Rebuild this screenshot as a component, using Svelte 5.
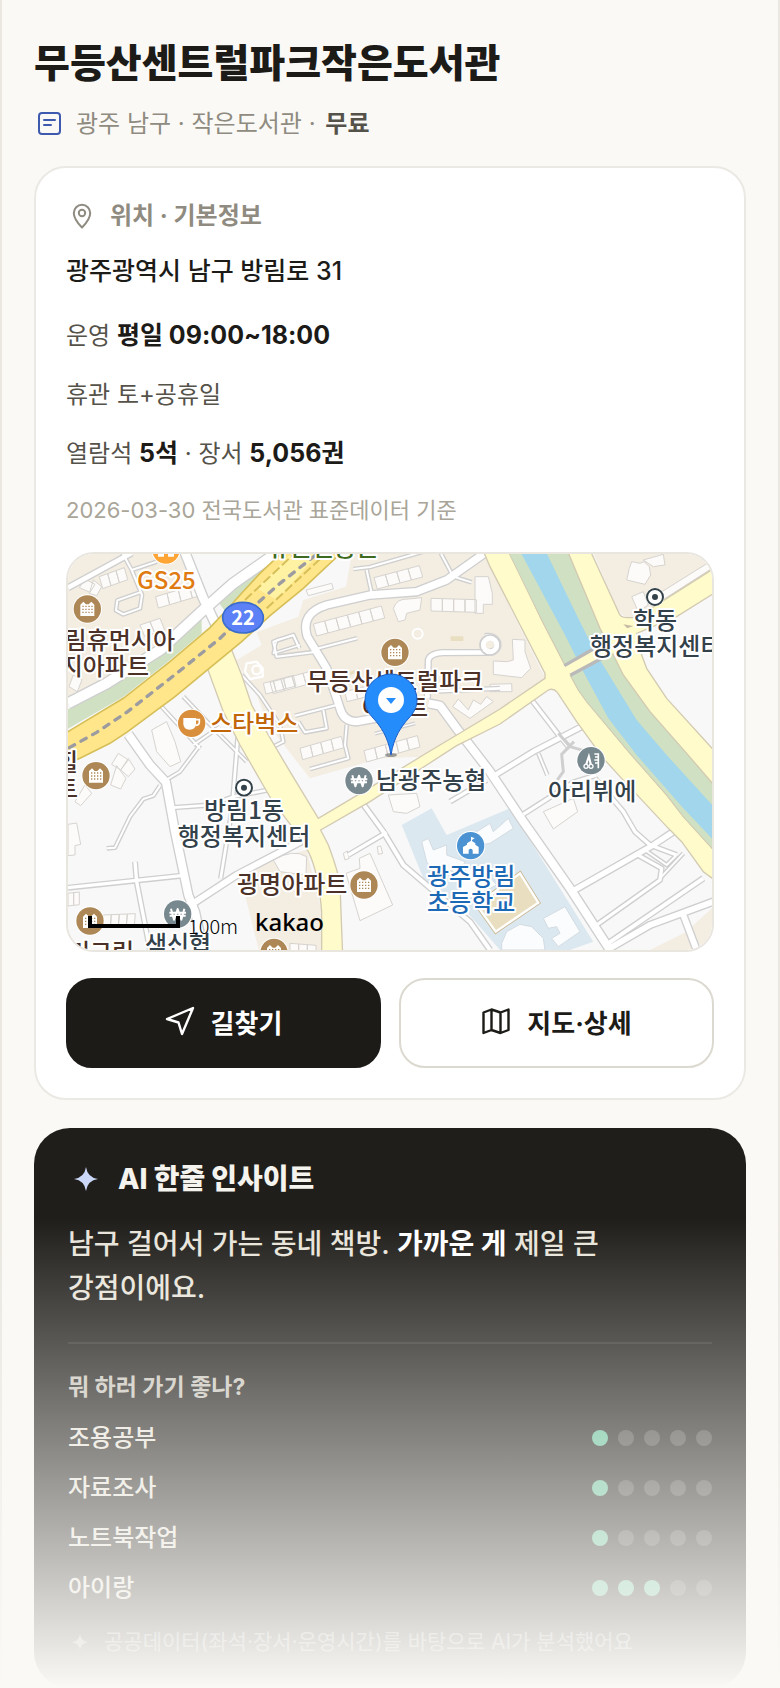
<script>
  const activities = [
    { name: '조용공부', score: 1 },
    { name: '자료조사', score: 1 },
    { name: '노트북작업', score: 1 },
    { name: '아이랑', score: 3 }
  ];
  const levels = [1, 2, 3, 4, 5];

  // Minor streets: [path, casing width]
  const streets = [
    ['M24 128L215 24', 22],
    ['M185 20L215 75L290 50M215 75L246 150L240 190L190 208L168 196L172 166L240 142', 14],
    ['M24 475L140 415L300 315L430 195L520 115L670 10', 38],
    ['M370 10L430 160L475 255', 34],
    ['M205 568L270 660L318 712L345 860L385 1050L405 1100L430 1215', 32],
    ['M400 1075L530 990L745 878', 26],
    ['M340 788L450 780L520 755L625 735', 16],
    ['M535 560L515 800L482 1000', 16],
    ['M300 722L280 752L250 762L210 815L165 908L140 910', 14],
    ['M24 1028L365 992M225 950L230 1010L270 1215', 18],
    ['M318 705L360 680L420 600', 14],
    ['M300 480L420 610M370 455L470 560L560 650M400 600L480 545', 14],
    ['M545 390L600 450L660 540L670 590L640 605', 14],
    ['M720 300L640 325L650 285L700 272L715 300', 12],
    ['M1280 20L1160 105L1070 140L930 150L800 180Q720 205 742 275L800 370L840 490Q850 530 890 530L1000 510', 30],
    ['M880 72L930 66L1090 20M920 75L935 145', 14],
    ['M1140 20L1180 95L1235 112', 14],
    ['M765 313L892 280M770 320L650 335L640 290L700 270L718 310', 14],
    ['M1102 460L1105 345Q1110 325 1150 323L1290 322Q1320 315 1312 290Q1300 270 1275 275', 22],
    ['M1100 440L1320 430', 16],
    ['M1105 475L1140 482L1190 550L1290 680L1390 830L1530 1030L1650 1215', 32],
    ['M705 512L830 480M790 495L800 550L735 562L715 530', 14],
    ['M860 540L855 600L865 640L750 672', 14],
    ['M945 566L1065 535', 12],
    ['M910 778L970 860L1030 960L1100 1020L1230 1130L1290 1215', 20],
    ['M980 862L865 930', 18],
    ['M1170 770L1280 705', 18],
    ['M1290 700L1420 620L1565 545', 22],
    ['M1415 465L1500 575L1530 610', 18],
    ['M1390 808L1540 712L1610 690', 18],
    ['M1435 625L1462 690', 14],
    ['M1535 1040L1780 900L1840 860', 24],
    ['M1605 700L1690 800L1725 860L1770 900L1850 930', 18],
    ['M1725 925L1805 970L1800 1005L1610 1140', 18],
    ['M1800 1000L1870 925M1755 915L1820 960L1850 930', 14],
    ['M1640 1198L1930 1000', 20],
    ['M1640 1215L1770 1140L1960 1070M1870 1110L1910 1215', 26]
  ];

  // Rows of apartment blocks: start, step, depth, count
  const rows = [
    [760, 237, 34, -9, 10, 36, 6],
    [942, 98, 34, -9, 10, 34, 4],
    [1113, 160, 34, 1, 0, 38, 4],
    [630, 412, 33, -9, 10, 34, 4],
    [720, 610, 31, -9, 8, 34, 4],
    [912, 617, 32, -9, 8, 34, 5],
    [855, 440, 32, -8, 6, 30, 3],
    [287, 155, 34, -10, 8, 34, 4],
    [118, 95, 25, -9, 10, 36, 3],
    [240, 240, 30, -10, 14, 34, 2],
    [130, 1110, 24, -1, -3, 36, 4],
    [24, 1045, 17, -2, 0, 38, 2],
    [610, 415, 30, -8, 8, 32, 3],
    [690, 1195, 26, 2, 0, 40, 3]
  ].flatMap(([x, y, sx, sy, dx, dy, n]) =>
    Array.from({ length: n }, (_, i) => {
      const a = x + sx * i;
      const b = y + sy * i;
      return `M${a} ${b}l${sx} ${sy}l${dx} ${dy}l${-sx} ${-sy}z`;
    })
  );

  const buildings = [
    'M75 102L105 118L90 142L58 128ZM100 105L125 125L110 152L88 145Z',
    'M40 390L66 404L52 440L27 425Z',
    'M175 625L205 645L182 675L155 658ZM205 640L225 672L205 695L182 675ZM170 662L198 700L182 732L152 720Z',
    'M75 720L95 745L62 782L45 770ZM24 838L50 834L62 898L45 902L45 930L24 932Z',
    'M275 555L320 530L345 590L362 650L330 665L290 620Z',
    'M738 135L815 115L820 132L745 152Z',
    'M1000 190Q1010 160 1045 162L1085 158L1080 195L1040 205L1035 225L1015 230Z',
    'M1245 95L1285 95L1297 145L1297 178L1270 178L1270 205L1245 205Z',
    'M1178 485L1195 462L1225 495L1240 465L1262 478L1280 455L1300 470L1230 520Z',
    'M985 750L1070 745L1080 785L1040 805L1000 800Z',
    'M898 940L930 925L998 1080L900 1127L858 985L900 970Z',
    'M850 925L862 918L868 940L855 945ZM952 905L962 903L968 925L955 928Z',
    'M640 945Q700 910 740 935L738 990L660 980Z',
    'M1357 283L1395 285L1395 320L1412 370L1385 398L1300 388L1300 348L1342 350L1360 345Z',
    'M1290 418L1355 416L1356 440L1290 440Z',
    'M1715 50L1740 55L1752 50L1768 65L1772 90L1755 118L1700 105L1708 70ZM1750 45L1810 28L1815 60L1780 65Z',
    'M1715 155L1750 140L1765 180L1735 200ZM1790 150L1950 50L1956 70L1800 170Z',
    'M1450 800L1540 760L1553 800L1480 852Z'
  ];

  const schoolBlocks = [
    'M1085 890L1105 880L1120 915L1160 900L1160 930L1215 950L1200 985L1150 970L1120 985L1100 950Z',
    'M1250 860L1290 835L1300 860L1345 820L1360 850L1290 895L1260 900Z',
    'M1190 985L1260 960L1310 1020L1230 1060L1200 1045Z',
    'M1450 1120L1515 1085L1560 1160L1495 1205L1475 1180L1500 1165L1490 1145L1465 1150Z',
    'M1325 1195L1340 1160L1380 1138L1415 1145L1450 1180L1455 1215L1325 1215Z'
  ];

  const apartments = [[82, 192], [1005, 322], [108, 692], [90, 1128], [912, 1020], [642, 1222]];
  const banks = [[897, 707], [353, 1107]];
  const offices = [[1785, 156], [552, 728]];

  const labels = [
    ['유근린공원', 323, 556, 'middle', 'park'],
    ['GS25', 137, 589, 'start', 'store'],
    ['림휴먼시아', 175, 649, 'end', 'home'],
    ['지아파트', 149, 675, 'end', 'home'],
    ['스타벅스', 210, 732, 'start', 'cafe'],
    ['무등산센트럴파크', 395, 690, 'middle', 'home'],
    ['아파트', 395, 716, 'middle', 'home'],
    ['학동', 655, 629, 'middle', 'place'],
    ['행정복지센터', 590, 655, 'start', 'place'],
    ['남광주농협', 376, 789, 'start', 'place'],
    ['아리뷔에', 548, 800, 'start', 'place'],
    ['방림1동', 244, 819, 'middle', 'place'],
    ['행정복지센터', 244, 845, 'middle', 'place'],
    ['광명아파트', 237, 893, 'start', 'home'],
    ['광주방림', 427, 885, 'start', 'school'],
    ['초등학교', 427, 911, 'start', 'school'],
    ['힐', 78, 771, 'end', 'home'],
    ['트', 78, 797, 'end', 'home'],
    ['리그린', 101, 961, 'middle', 'home'],
    ['색신협', 178, 953, 'middle', 'place']
  ];
</script>

<main class="page">
  <header>
    <h1>무등산센트럴파크작은도서관</h1>
    <p class="meta">
      <svg class="i30" viewBox="0 0 30 30" fill="none" stroke="#3d5aae" stroke-width="2" stroke-linecap="round" aria-hidden="true">
        <rect x="5" y="4" width="21" height="21" rx="3" />
        <path d="M10 11h11M10 16h7" />
      </svg>
      <span>광주 남구 · 작은도서관 · <strong>무료</strong></span>
    </p>
  </header>

  <section class="card">
    <h2 class="cap">
      <svg class="i32" viewBox="0 0 32 32" fill="none" stroke="currentColor" stroke-width="2" stroke-linejoin="round" aria-hidden="true">
        <path d="M16 27.500C12.500 24 7.800 18.500 7.800 13a8.200 8.200 0 0 1 16.400 0c0 5.500-4.700 11-8.200 14.500z" />
        <circle cx="16" cy="13" r="3.200" />
      </svg>
      위치 · 기본정보
    </h2>
    <p class="address">광주광역시 남구 방림로 31</p>
    <div class="facts">
      <p>운영 <b>평일 09:00~18:00</b></p>
      <p>휴관 토+공휴일</p>
      <p>열람석 <b>5석</b> · 장서 <b>5,056권</b></p>
      <p class="source">2026-03-30 전국도서관 표준데이터 기준</p>
    </div>

    <div class="map">
      <svg viewBox="68 554 644 396" preserveAspectRatio="xMidYMid slice" role="img" aria-label="지도">
        <g transform="translate(60 545) scale(0.33333)">
          <path fill="#f8f8f8" d="M0 0H1980V1240H0Z" />
          <g fill="#f3ede2">
            <path d="M0 0H380L425 160V210L300 300L140 410L0 480Z" />
            <path d="M880 0L858 125L730 165L715 215L590 262L605 300L530 345L555 400L590 450L625 540L750 700L960 640L1090 635L1320 500L1455 398L1290 65L1270 0Z" />
            <path d="M1590 0L1675 200L1700 218H1730L1970 65V0Z" />
            <path d="M555 1050L600 950L740 915L785 1100V1230H600Z" />
            <path d="M1770 1215L1880 1160L1910 1215ZM1890 1150L1956 1090V1190L1920 1200Z" />
          </g>
          <path fill="#dce8f0" d="M1025 840L1115 790L1160 870L1350 790L1600 1190L1530 1215H1320L1220 1100L1090 1000Z" />
          <g fill="#cfe0c3">
            <path d="M0 505L150 430L330 310L425 205V265L330 345L190 455L0 565Z" />
            <path d="M470 165L560 105L665 0H700L540 150L500 205Z" />
          </g>

          <path d={buildings.join('') + rows.join('')} fill="#fcfbf9" stroke="#d6d3cf" stroke-width="3" />
          <path d={schoolBlocks.join('')} fill="#fafcfd" stroke="#d3dbe2" stroke-width="3" />
          <path d="M1380 985L1435 1073L1307 1160L1250 1080Z" fill="#fff" stroke="#cbb894" stroke-width="12" />
          <path d="M1380 985L1435 1073L1307 1160L1250 1080Z" fill="#e9dfc0" stroke="#fff" stroke-width="7" />
          <path d="M1172 274h38v14h-38zM870 380l30-10v10l-30 10z" fill="#e9dfc0" />

          <g fill="none" stroke-linejoin="round" stroke-linecap="butt">
            {#each streets as [d, w]}
              <path {d} stroke="#cfcfcf" stroke-width={w} />
            {/each}
            {#each streets as [d, w]}
              <path {d} stroke="#fff" stroke-width={w - 8} />
            {/each}
            <path d="M1542 590L1505 628L1510 680L1492 705M1495 565L1530 605L1600 625" stroke="#cfcfcf" stroke-width="9" />
            <circle cx="1073" cy="266" r="15" stroke="#fff" stroke-width="6" />
            <circle cx="1290" cy="300" r="30" stroke="#cfcfcf" stroke-width="5" />
            <circle cx="1290" cy="300" r="20" stroke="#fff" stroke-width="14" />
            <path d="M560 355L590 350L608 370V395L570 402L555 380Z" stroke="#fff" stroke-width="7" />
            <circle cx="590" cy="375" r="13" stroke="#fff" stroke-width="7" />
          </g>

          <path fill="#fffbcb" stroke="#d3cab2" stroke-width="4" d="M435 350L505 290L545 390L575 480L625 570L690 680L775 820L930 728L1090 630L1320 492L1455 400V385L1290 65L1262 0H1340L1445 225L1520 370L1555 435L1580 470L1710 625L1820 750L1870 815L1970 925V1010L1930 980L1865 890L1825 850L1680 695L1630 640L1550 530L1492 442Q1480 428 1465 435L1320 537L1190 602L930 770L782 855L805 900Q835 980 840 1020L848 1230H785V1100Q775 980 745 920L700 850L635 765L540 600L490 500Z" />
          <path fill="#cfe0c3" stroke="#d3cab2" stroke-width="3" d="M1335 0L1445 225L1520 370L1555 435L1580 470L1710 625L1820 750L1870 815L1970 925V725L1880 625L1770 500L1690 390L1620 250L1515 0Z" />
          <path fill="#a2d6ec" d="M1370 0L1515 270L1570 380L1645 520L1730 630L1870 790L1970 895V795L1820 630L1730 525L1620 345L1590 290L1550 210L1448 0Z" />
          <path fill="#fffbcb" stroke="#d3cab2" stroke-width="4" d="M1515 0L1620 250L1690 390L1770 500L1880 625L1970 730V625L1820 460L1760 370L1730 290V265L1850 215L1970 140V65L1730 218H1700Q1680 218 1675 200L1583 0Z" />
          <path fill="#fffbcb" d="M1508 365L1530 392L1715 295L1690 255Z" />
          <path d="M1513 362L1600 312M1531 391L1640 332" stroke="#b9b9b9" stroke-width="10" />
          <path d="M1690 238L1720 243L1702 250Z" fill="#c6bba5" />

          <path fill="#ffe68a" stroke="#d6bf58" stroke-width="5" d="M0 575L24 560L190 460L330 350L450 248L500 195L540 150L600 85L690 0H870L840 27L730 130L630 212L545 290L345 455L200 562L150 595L60 640L0 665Z" />
          <path fill="#fff2a3" d="M590 130L720 0H800L650 165Z" />
          <path d="M555 165L725 5M620 190L815 10" stroke="#d6bf58" stroke-width="6" stroke-dasharray="28 10" />
          <path fill="none" stroke="#9b9ba0" stroke-width="10" stroke-linecap="round" stroke-dasharray="18 22" d="M28 608L110 562L200 502L350 385L480 280L560 203L660 115L780 20" />

          <ellipse cx="549" cy="218" rx="61" ry="46" fill="#5c80f5" stroke="#3a6dcb" stroke-width="5" />

          {#each apartments as [x, y]}
            <g transform="translate({x} {y})">
              <circle r="44" fill="#fff" />
              <circle r="41" fill="#ad8856" />
              <path fill="#fff" d="M-21 21V-13L-12-22L-4-14H4L12-22L21-13V21Z" />
              <path stroke="#ad8856" stroke-width="4" stroke-dasharray="4 5" d="M-15-8H17M-15 1H17M-15 10H17" />
            </g>
          {/each}
          {#each banks as [x, y]}
            <g transform="translate({x} {y})">
              <circle r="44" fill="#fff" />
              <circle r="41" fill="#77888f" />
              <path fill="none" stroke="#fff" stroke-width="6" stroke-linejoin="round" d="M-20-16L-11 17L0-15L11 17L20-16M-25-4H25M-24 5H24" />
            </g>
          {/each}
          {#each offices as [x, y]}
            <g transform="translate({x} {y})">
              <circle r="28" fill="#fff" />
              <circle r="24" fill="#fff" stroke="#33414a" stroke-width="6" />
              <circle r="9" fill="#33414a" />
            </g>
          {/each}
          <g transform="translate(395 535)">
            <circle r="44" fill="#fff" />
            <circle r="41" fill="#d98e3c" />
            <path fill="#fff" d="M-25-16H13V2Q12 19-6 19Q-24 19-25 2Z" />
            <path fill="none" stroke="#fff" stroke-width="5" d="M12-11H23V-3Q22 6 11 6" />
          </g>
          <g transform="translate(318 15)">
            <circle r="44" fill="#fff" />
            <circle r="41" fill="#ffa535" />
            <path fill="#fff" d="M-24-12H24V20H6V8H-6V20H-24Z" />
          </g>
          <g transform="translate(1232 902)">
            <circle r="44" fill="#fff" />
            <circle r="41" fill="#4a92d2" />
            <path fill="#fff" d="M-23 24V4L-11-3V-7L1-15V-27L12-22L4-17V-14L14-7V-3L24 4V24H6V13Q0 6-6 13V24Z" />
          </g>
          <g transform="translate(1593 647)">
            <circle r="44" fill="#fff" />
            <circle r="41" fill="#77888f" />
            <path fill="none" stroke="#fff" stroke-width="5" d="M22-22V23M22-20H10M22-11H12M22-2H10M22 7H12" />
            <path fill="#fff" d="M-6-24L3 12H-4L-7-2L-11 12H-18Z" />
            <circle cx="-15" cy="17" r="6" fill="none" stroke="#fff" stroke-width="4" />
            <circle cx="0" cy="17" r="6" fill="none" stroke="#fff" stroke-width="4" />
          </g>
        </g>

        <g class="labels">
          {#each labels as [text, x, y, anchor, kind]}
            <text {x} {y} text-anchor={anchor} class={kind}>{text}</text>
          {/each}
        </g>
        <text class="route" x="243" y="625" text-anchor="middle">22</text>

        <g transform="translate(391 755)">
          <ellipse cy="0" rx="6" ry="2" fill="#777" opacity="0.7" />
          <path fill="#258cfb" stroke="#1c5fc9" stroke-width="1" d="M0 0C-3-19-11-29-17-36C-23-42-26-48-26-55a26 26 0 0 1 52 0C26-48 23-42 17-36C11-29 3-19 0 0Z" />
          <circle cy="-55" r="13" fill="#fff" />
          <path fill="#258cfb" d="M-5-57H5L0-51Z" />
        </g>

        <path fill="none" stroke="#000" stroke-width="4" d="M90 916V926H178V916" />
        <text class="scale" x="188" y="934">100m</text>
        <text class="brand" x="255" y="931">kakao</text>
      </svg>
    </div>

    <div class="actions">
      <button class="primary" type="button">
        <svg class="i30" viewBox="0 0 30 30" fill="none" stroke="currentColor" stroke-width="2.400" stroke-linejoin="round" aria-hidden="true">
          <path d="M28 2L17 28L13.500 16.500L2 13Z" />
        </svg>
        길찾기
      </button>
      <button type="button">
        <svg class="i30" viewBox="0 0 30 30" fill="none" stroke="currentColor" stroke-width="2.400" stroke-linejoin="round" aria-hidden="true">
          <path d="M2.500 6.500L10.500 3.500L19.500 6.500L27.500 3.500V24L19.500 27L10.500 24L2.500 27ZM10.500 3.500V24M19.500 6.500V27" />
        </svg>
        지도·상세
      </button>
    </div>
  </section>

  <section class="insight">
    <h2>
      <svg viewBox="0 0 36 36" aria-hidden="true">
        <path fill="#cbd7f6" d="M18 6Q19.500 16.500 30 18Q19.500 19.500 18 30Q16.500 19.500 6 18Q16.500 16.500 18 6Z" />
      </svg>
      AI 한줄 인사이트
    </h2>
    <p class="quote">남구 걸어서 가는 동네 책방. <strong>가까운 게</strong> 제일 큰 강점이에요.</p>
    <h3>뭐 하러 가기 좋나?</h3>
    <ul>
      {#each activities as item}
        <li>
          <span>{item.name}</span>
          <span class="dots" role="img" aria-label="5점 중 {item.score}점">
            {#each levels as level}
              <i class:on={level <= item.score}></i>
            {/each}
          </span>
        </li>
      {/each}
    </ul>
    <p class="note">
      <svg viewBox="0 0 24 24" aria-hidden="true">
        <path fill="currentColor" d="M12 4Q13 11 20 12Q13 13 12 20Q11 13 4 12Q11 11 12 4Z" />
      </svg>
      공공데이터(좌석·장서·운영시간)를 바탕으로 AI가 분석했어요
    </p>
  </section>
  <div class="fade"></div>
</main>

<style>
  :global(body) {
    background: #faf9f6;
  }
  .page {
    position: relative;
    box-sizing: border-box;
    min-height: 100vh;
    padding: 36px 32px 0;
    border: solid #e9e7e0;
    border-width: 0 2px;
    background: #faf9f6;
    color: #1c1b18;
    font-family: Inter, 'Noto Sans CJK KR', sans-serif;
    font-size: 24px;
    word-break: keep-all;
  }
  h1, h2, h3, p, ul {
    margin: 0;
    padding: 0;
  }
  svg {
    display: block;
    flex: none;
  }
  .i30 { width: 30px; height: 30px; }
  .i32 { width: 32px; height: 32px; }
  h1 {
    font-size: 39px;
    line-height: 54px;
    font-weight: 800;
  }
  .meta {
    display: flex;
    align-items: center;
    gap: 12px;
    margin-top: 17px;
    line-height: 34px;
    color: #8f8b80;
  }
  .meta strong {
    margin-left: 3px;
    color: #55524a;
    font-weight: 600;
  }
  .card {
    margin-top: 25px;
    padding: 30px;
    border: 2px solid #ebe9e3;
    border-radius: 32px;
    background: #fff;
  }
  .cap {
    display: flex;
    align-items: center;
    gap: 12px;
    font-size: 24px;
    line-height: 36px;
    font-weight: 700;
    color: #8f8b80;
  }
  .address {
    margin-top: 16px;
    font-size: 25px;
    line-height: 42px;
    font-weight: 500;
  }
  .facts {
    display: flex;
    flex-direction: column;
    gap: 20px;
    margin-top: 24px;
    line-height: 39px;
    color: #55524a;
  }
  .facts b {
    color: #1c1b18;
    font-size: 25px;
    font-weight: 700;
  }
  .facts .source {
    font-size: 22px;
    line-height: 34px;
    color: #a9a598;
  }
  .map {
    margin-top: 25px;
    overflow: hidden;
    border: 2px solid #e9e6df;
    border-radius: 28px;
  }
  .map svg {
    width: 100%;
    height: auto;
  }
  .labels text {
    font: 500 24px 'Noto Sans CJK KR', sans-serif;
    fill: #33414a;
    stroke: #fff;
    stroke-width: 4px;
    stroke-linejoin: round;
    paint-order: stroke;
  }
  .labels .home { fill: #4b3127; }
  .labels .store { fill: #e07b12; }
  .labels .cafe { fill: #c2660a; }
  .labels .school { fill: #1c69b5; }
  .labels .park { fill: #3f6b20; }
  .route {
    font: 700 20px 'Noto Sans CJK KR', sans-serif;
    fill: #fff;
  }
  .scale {
    font: 300 20px 'Noto Sans CJK KR', sans-serif;
    fill: #000;
  }
  .brand {
    font: 500 24px 'Noto Sans', sans-serif;
    fill: #000;
  }
  .actions {
    display: grid;
    grid-template-columns: 1fr 1fr;
    gap: 18px;
    margin-top: 26px;
  }
  button {
    display: flex;
    align-items: center;
    justify-content: center;
    gap: 16px;
    height: 90px;
    padding: 0 0 4px;
    border: 2px solid #dcd9d0;
    border-radius: 26px;
    background: #fff;
    color: #1c1b18;
    font: inherit;
    font-size: 26px;
    font-weight: 700;
    cursor: pointer;
  }
  .primary {
    border-color: #1c1b18;
    background: #1c1b18;
    color: #fff;
  }
  .insight {
    margin-top: 28px;
    padding: 30px 34px;
    border-radius: 36px;
    background: #201e1a;
    color: #e8e4da;
  }
  .insight h2 {
    display: flex;
    align-items: center;
    gap: 14px;
    font-size: 28px;
    line-height: 42px;
    font-weight: 800;
    color: #f5f3ed;
  }
  .insight h2 svg {
    width: 36px;
    height: 36px;
  }
  .quote {
    margin-top: 22px;
    padding-bottom: 32px;
    border-bottom: 2px solid rgba(255, 255, 255, 0.08);
    font-size: 28px;
    line-height: 44px;
    font-weight: 500;
  }
  .quote strong {
    color: #fff;
    font-weight: 700;
  }
  h3 {
    margin-top: 28px;
    font-size: 23px;
    line-height: 30px;
    font-weight: 700;
    color: #c7c4bb;
  }
  ul {
    display: flex;
    flex-direction: column;
    gap: 16px;
    margin-top: 19px;
    list-style: none;
  }
  li {
    display: flex;
    align-items: center;
    justify-content: space-between;
    line-height: 34px;
    font-weight: 500;
  }
  .dots {
    display: flex;
    gap: 10px;
  }
  .dots i {
    width: 16px;
    height: 16px;
    border-radius: 50%;
    background: rgba(255, 255, 255, 0.18);
  }
  .dots .on {
    background: #62bf96;
  }
  .note {
    display: flex;
    align-items: center;
    gap: 12px;
    margin-top: 21px;
    font-size: 21px;
    line-height: 32px;
    color: rgba(255, 255, 255, 0.5);
  }
  .note svg {
    width: 24px;
    height: 24px;
  }
  .fade {
    position: absolute;
    right: -2px;
    bottom: 0;
    left: -2px;
    height: 470px;
    background: linear-gradient(rgba(250, 249, 246, 0), #faf9f6);
    pointer-events: none;
  }
</style>
